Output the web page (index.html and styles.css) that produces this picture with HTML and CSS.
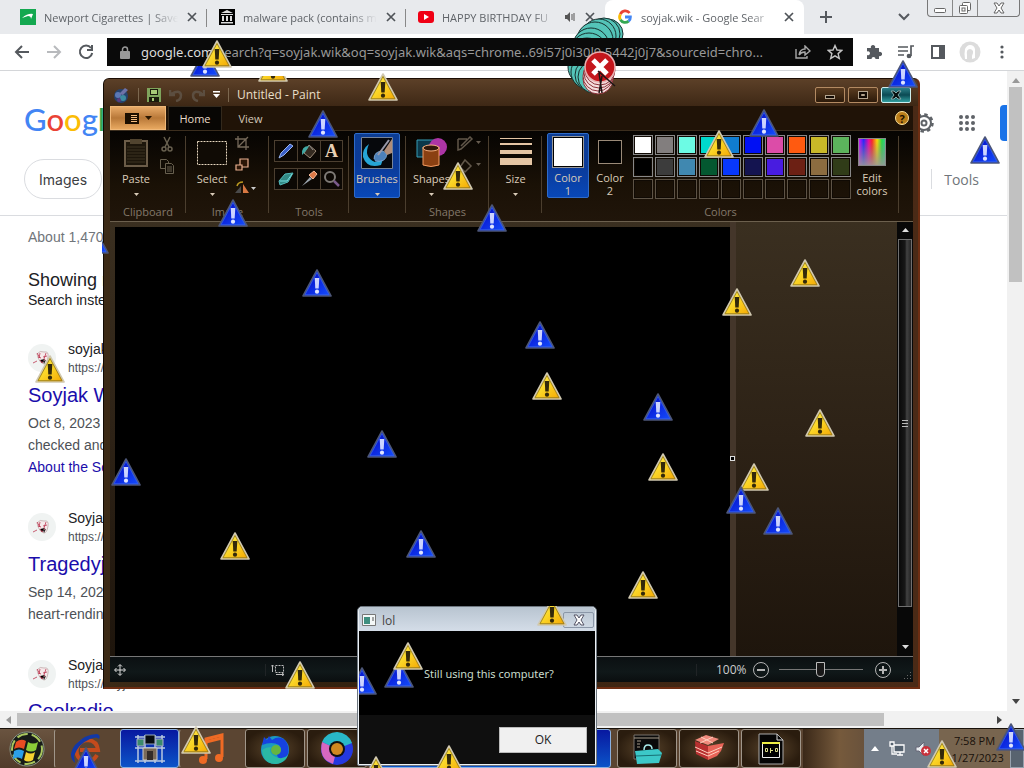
FILE: index.html
```html
<!DOCTYPE html>
<html lang="en">
<head>
<meta charset="utf-8">
<title>Desktop</title>
<link rel="stylesheet" href="styles.css">
</head>
<body>
<svg class="defs" width="0" height="0" aria-hidden="true">
  <defs>
    <linearGradient id="gy" x1="0" y1="0" x2="1" y2="1"><stop offset="0" stop-color="#fff45c"/><stop offset=".5" stop-color="#fbd526"/><stop offset="1" stop-color="#f4a400"/></linearGradient>
    <linearGradient id="gb" x1="0" y1="0" x2="1" y2="1"><stop offset="0" stop-color="#0000a8"/><stop offset=".5" stop-color="#0c28e0"/><stop offset="1" stop-color="#1450ff"/></linearGradient>
    <linearGradient id="rainbow"><stop offset="0" stop-color="#f0f"/><stop offset=".2" stop-color="#22f"/><stop offset=".38" stop-color="#e0a"/><stop offset=".5" stop-color="#f22"/><stop offset=".68" stop-color="#fd0"/><stop offset=".85" stop-color="#2d4"/><stop offset="1" stop-color="#3c9"/></linearGradient>
    <linearGradient id="fadegray" x1="0" y1="0" x2="0" y2="1"><stop offset="0" stop-color="#888" stop-opacity="0"/><stop offset="1" stop-color="#999" stop-opacity=".9"/></linearGradient>
    <symbol id="warn" viewBox="0 0 30 28"><path d="M15 1 29 27H1z" fill="url(#gy)" stroke="#d0c8b0" stroke-width="1.6" stroke-linejoin="round"/><path d="M15 3.500 27 25.700H3z" fill="none" stroke="#8f7620" stroke-width=".8"/><path d="M12.700 9h4.600l-.6 10.500h-3.400z" fill="#33290a"/><circle cx="15" cy="22.700" r="2.100" fill="#33290a"/></symbol>
    <symbol id="info" viewBox="0 0 30 28"><path d="M15 1 29 27H1z" fill="url(#gb)" stroke="#4c5678" stroke-width="1.600" stroke-linejoin="round"/><path d="M15 3.500 27 25.700H3z" fill="none" stroke="#3560e8" stroke-width=".8"/><path d="M12.700 9h4.600l-.6 10.500h-3.400z" fill="#ccd4ff"/><circle cx="15" cy="22.700" r="2.100" fill="#dfe4ff"/></symbol>
    <symbol id="close" viewBox="0 0 12 12"><path d="M2 2l8 8M10 2l-8 8" stroke="#4f5358" stroke-width="1.700"/></symbol>
    <symbol id="down" viewBox="0 0 7 4"><path d="M0 0h7L3.500 4z" fill="currentColor"/></symbol>
    <symbol id="face" viewBox="0 0 28 28"><circle cx="14" cy="14" r="14" fill="#f0f3f2"/><path d="M9 10q3-4 7-2 5-1 4 5-1 7-4 7-5-1-7-10" fill="#f6e9ea" stroke="#b9a0a0" stroke-width=".7"/><path d="M9 9l3 5M12 9l-1 5M18 9l-2 6M10 13l3 1M15 13l4-1M12 16l2 3 3-4M5 19l4-2" stroke="#bb3650" stroke-width=".8"/><path d="M15 17l3-1-2 4z" fill="#222"/></symbol>
    <clipPath id="c1"><path d="M180 66h60v20h-60z"/></clipPath>
    <clipPath id="c2"><path d="M250 76h60v20h-60z"/></clipPath>
    <clipPath id="c3"><path d="M102 220h40v50h-40z"/></clipPath>
    <clipPath id="c4"><path d="M359 660h40v50h-40z"/></clipPath>
    <clipPath id="c5"><path d="M530 606h50v40h-50z"/></clipPath>
    <clipPath id="c6"><path d="M560 10h80v28h-80zM560 66h80v40h-80z"/></clipPath>
  </defs>
</svg>

<div class="desktop">
  <section class="browser">
    <div class="tabstrip">
      <div class="tab"><svg class="fav" viewBox="0 0 16 16"><path fill="#14a850" d="M0 0h16v16H0z"/><path d="M2 9q6-5 11-4l-2 5q0-3-3-3z" fill="#fff"/></svg><span class="tabname">Newport Cigarettes | Save</span><button class="x" aria-label="Close tab"><svg width="12" height="12"><use href="#close"/></svg></button></div>
      <div class="tab"><svg class="fav" viewBox="0 0 16 16"><path d="M0 0h16v16H0z"/><path d="M8 1l6 3H2zM2 5h12v1H2zM3 7h2v5H3zM7 7h2v5H7zM11 7h2v5h-2zM2 13h12v1.500H2z" fill="#ddd"/></svg><span class="tabname">malware pack (contains m</span><button class="x" aria-label="Close tab"><svg width="12" height="12"><use href="#close"/></svg></button></div>
      <div class="tab"><svg class="fav" viewBox="0 0 16 16"><rect y="2" width="16" height="12" rx="3" fill="#f00014"/><path d="M6 5l5 3-5 3z" fill="#fff"/></svg><span class="tabname">HAPPY BIRTHDAY FU</span><svg class="audio" viewBox="0 0 12 12"><path d="M1 4h2l3-3v10L3 8H1z" fill="#555"/><path d="M8 3v6M10 2v8" stroke="#555" stroke-width="1"/></svg><button class="x" aria-label="Close tab"><svg width="12" height="12"><use href="#close"/></svg></button></div>
      <div class="tab active"><svg class="fav" viewBox="0 0 16 16" fill="none" stroke-width="2.800"><path d="M12.600 4A5.400 5.400 0 0 0 3.400 5.200" stroke="#ea4335"/><path d="M3.400 5.200a5.400 5.400 0 0 0 0 5.600" stroke="#fbbc05"/><path d="M3.400 10.800a5.400 5.400 0 0 0 8.200 1.300" stroke="#34a853"/><path d="M11.600 12.100Q13.500 10.500 13.400 8H8" stroke="#4285f4"/></svg><span class="tabname">soyjak.wik - Google Sear</span><button class="x" aria-label="Close tab"><svg width="12" height="12"><use href="#close"/></svg></button></div>
      <button class="newtab" aria-label="New tab"><svg width="14" height="14"><path d="M7 1v12M1 7h12" stroke="#55595e" stroke-width="2"/></svg></button>
      <button class="tabmenu" aria-label="Search tabs"><svg width="12" height="8"><path d="M1 1l5 5 5-5" fill="none" stroke="#55595e" stroke-width="2"/></svg></button>
      <div class="winbtns">
        <button aria-label="Minimize"><svg width="14" height="12"><rect x="1.500" y="6.500" width="11" height="4" rx="1" fill="#fff" stroke="#666"/></svg></button>
        <button aria-label="Restore"><svg width="14" height="14" fill="#fff" stroke="#666"><rect x="4.500" y="1.500" width="8" height="8" rx="1"/><rect x="1.500" y="4.500" width="8" height="8" rx="1"/><rect x="4" y="7" width="3" height="3"/></svg></button>
        <button class="wide" aria-label="Close"><svg width="14" height="12"><path d="M2 1h3l2 3 2-3h3L9 6l3 5H9L7 8l-2 3H2l3-5z" fill="#fff" stroke="#666"/></svg></button>
      </div>
    </div>
    <div class="toolbar">
      <button aria-label="Back"><svg width="16" height="16" fill="none" stroke="#55595e" stroke-width="2"><path d="M15 8H2M8 2L2 8l6 6"/></svg></button>
      <button aria-label="Forward"><svg width="16" height="16" fill="none" stroke="#b8babd" stroke-width="2"><path d="M1 8h13M8 2l6 6-6 6"/></svg></button>
      <button aria-label="Reload"><svg width="16" height="16" fill="none" stroke="#55595e" stroke-width="2"><path d="M13 4A6.200 6.200 0 1 0 14.200 9"/><path d="M14 1v5H9" /></svg></button>
      <div class="omnibox">
        <svg width="10" height="13"><rect y="5" width="10" height="8" rx="1" fill="#999"/><path d="M2.500 5V3.500a2.500 2.500 0 0 1 5 0V5" fill="none" stroke="#999" stroke-width="1.500"/></svg>
        <span class="url"><b>google.com</b>/search?q=soyjak.wik&amp;oq=soyjak.wik&amp;aqs=chrome..69i57j0i30l9.5442j0j7&amp;sourceid=chro...</span>
        <button aria-label="Share"><svg width="16" height="14" fill="none" stroke="#a9a9a9" stroke-width="1.400"><path d="M1 4v9h11v-2M4 10q1-6 6-6V1l5 5-5 4V7q-4 0-6 3"/></svg></button>
        <button aria-label="Bookmark"><svg width="16" height="16"><path d="M8 1.500l2 4.500 4.800.4-3.700 3.200 1.200 4.800L8 11.800l-4.300 2.600 1.200-4.800L1.200 6.400 6 6z" fill="none" stroke="#c4c4c4" stroke-width="1.400"/></svg></button>
      </div>
      <button aria-label="Extensions"><svg width="16" height="16"><path d="M1 4h4a2.200 2.200 0 1 1 4 0h4v4a2.200 2.200 0 1 1 0 4v3H9.500a2 2 0 1 0-4 0H1v-4a2 2 0 1 0 0-3.500z" fill="#55595e"/></svg></button>
      <button aria-label="Media"><svg width="16" height="16" fill="none" stroke="#55595e" stroke-width="1.700"><path d="M0 3h10M0 7h10M0 11h6M16 2h-3v10"/><circle cx="11" cy="12" r="1.500" fill="#55595e"/></svg></button>
      <button aria-label="Side panel"><svg width="16" height="16"><rect x="2" y="2" width="12" height="12" fill="none" stroke="#55595e" stroke-width="2"/><path d="M9 2h5v12H9z" fill="#55595e"/></svg></button>
      <button aria-label="Profile"><svg width="22" height="22"><circle cx="11" cy="11" r="10.500" fill="#dcdcdc"/><path d="M6 18q-1-5 0-10 2-4 5-4 4 0 5 4v9l-3 1v-3q3-6-2-7-4 0-3 6v4z" fill="#fff"/></svg></button>
      <button aria-label="Menu"><svg width="16" height="16" fill="#55595e"><circle cx="8" cy="3" r="1.600"/><circle cx="8" cy="8" r="1.600"/><circle cx="8" cy="13" r="1.600"/></svg></button>
    </div>
    <div class="view">
      <div class="page">
        <header class="ghead">
          <div class="grow">
            <a class="glogo" href="#"><span class="bl">G</span><span class="rd">o</span><span class="yl">o</span><span class="bl">g</span><span class="gr">l</span><span class="rd">e</span></a>
            <div class="gtools">
              <button aria-label="Settings"><svg width="20" height="20" fill="none" stroke="#5f6368"><circle cx="10" cy="10" r="7" stroke-width="2"/><circle cx="10" cy="10" r="8.500" stroke-width="2.500" stroke-dasharray="3.400 3.270"/><circle cx="10" cy="10" r="2.500" stroke-width="2"/></svg></button>
              <button aria-label="Apps"><svg width="18" height="18" fill="#5f6368"><circle cx="3" cy="3" r="2"/><circle cx="9" cy="3" r="2"/><circle cx="15" cy="3" r="2"/><circle cx="3" cy="9" r="2"/><circle cx="9" cy="9" r="2"/><circle cx="15" cy="9" r="2"/><circle cx="3" cy="15" r="2"/><circle cx="9" cy="15" r="2"/><circle cx="15" cy="15" r="2"/></svg></button>
              <button class="signin" aria-label="Sign in"></button>
            </div>
          </div>
          <div class="grow"><button class="chip">Images</button><button class="gt">Tools</button></div>
        </header>
        <main class="results">
          <p class="stats">About 1,470,000 results</p>
          <p class="showing">Showing results for</p>
          <p class="instead">Search instead for</p>
          <article>
            <div class="site"><svg width="28" height="28"><use href="#face"/></svg><div><div class="sn">soyjak.wiki</div><div class="su">https://soyjak.wiki</div></div></div>
            <h3><a href="#">Soyjak Wiki</a></h3>
            <p>Oct 8, 2023 — This page was<br>checked and verified</p>
            <a class="more" href="#">About the Soyjak</a>
          </article>
          <article>
            <div class="site"><svg width="28" height="28"><use href="#face"/></svg><div><div class="sn">Soyjak Wiki</div><div class="su">https://soyjak.wiki</div></div></div>
            <h3><a href="#">Tragedyjak</a></h3>
            <p>Sep 14, 2023 — This is a<br>heart-rending variant</p>
          </article>
          <article>
            <div class="site"><svg width="28" height="28"><use href="#face"/></svg><div><div class="sn">Soyjak Wiki</div><div class="su">https://soyjak.wiki</div></div></div>
            <h3><a href="#">Coolradio</a></h3>
          </article>
        </main>
      </div>
      <div class="vbar"><svg width="8" height="5"><path d="M0 5h8L4 0z" fill="#999"/></svg><i></i><svg width="8" height="5"><path d="M0 0h8L4 5z" fill="#444"/></svg></div>
    </div>
    <div class="hbar"><svg width="5" height="8"><path d="M5 0v8L0 4z" fill="#999"/></svg><i></i><svg width="5" height="8"><path d="M0 0v8l5-4z" fill="#444"/></svg></div>
  </section>

  <section class="paint">
    <div class="ptitle">
      <svg width="18" height="18"><circle cx="9" cy="10" r="7" fill="#26436e"/><circle cx="6" cy="9" r="3" fill="#5c78b5"/><circle cx="11" cy="12" r="3" fill="#3d8ba0"/><path d="M7 8l6-6 3 2-5 5z" fill="#6d72a8"/><circle cx="7" cy="14" r="2" fill="#5a3a80"/></svg>
      <i class="bar"></i>
      <button aria-label="Save"><svg width="14" height="14"><path fill="#7fa45c" d="M0 0h14v14H0z"/><path fill="#1a1a0c" d="M3 1h8v6H3zM2 9h10v5H2z"/><path fill="#a8c978" d="M4 2h6v4H4zM5 10h2v3H5z"/></svg></button>
      <button aria-label="Undo"><svg width="14" height="14" fill="none" stroke="#5c4e40" stroke-width="2.500"><path d="M1 2v5h5M2 6q9-5 10 1 0 5-5 6"/></svg></button>
      <button aria-label="Redo"><svg width="14" height="14" fill="none" stroke="#5c4e40" stroke-width="2.500"><path d="M13 2v5H8M12 6Q3 1 2 7q0 5 5 6"/></svg></button>
      <button aria-label="Customize"><svg width="7" height="7" fill="#fff"><path d="M0 0h7v1.500H0zM0 3h7L3.500 7z"/></svg></button>
      <i class="bar"></i>
      <span class="pname">Untitled - Paint</span>
      <div class="pbtns">
        <button aria-label="Minimize"><svg width="14" height="10"><rect x="2.500" y="5.500" width="9" height="3" fill="#110a04" stroke="#b4a48e"/></svg></button>
        <button aria-label="Maximize"><svg width="14" height="10"><rect x="2.500" y="1.500" width="9" height="7" fill="#110a04" stroke="#b4a48e"/><path d="M5.500 4.500h3v1h-3z" fill="#4a321c" stroke="#b4a48e"/></svg></button>
        <button class="pclose" aria-label="Close"><svg width="14" height="10"><path d="M2 1h3l2 2 2-2h3L9 5l3 4H9L7 7 5 9H2l3-4z" fill="#08100f" stroke="#8aa"/></svg></button>
      </div>
    </div>
    <div class="pinner">
      <div class="ptabs">
        <button class="pfile" aria-label="Paint menu"><svg width="14" height="11"><path d="M0 0h14v11H0z" fill="#1c0f00"/><path d="M6 2h6v1H6zM6 4h6v1H6zM6 6h6v1H6zM6 8h6v1H6z" fill="#f4bc80"/></svg><svg width="7" height="4"><use href="#down"/></svg></button>
        <button class="ptab on">Home</button><button class="ptab">View</button>
        <button class="help" aria-label="Help">?</button>
      </div>
      <div class="ribbon">
        <div class="grp g1"><div class="gbody">
          <button class="big"><svg width="32" height="32"><rect x="5" y="4" width="22" height="25" fill="#1d160b" stroke="#6b5c48" stroke-width="2"/><path d="M10 2h12v5H10z" fill="#51442f"/><path d="M7 10h18M7 13h18M7 16h18M7 19h18M7 22h18M7 25h18" stroke="#3c3222"/></svg><span>Paste</span><svg width="5" height="3"><use href="#down"/></svg></button>
          <div class="small"><button aria-label="Cut"><svg width="16" height="16" fill="none" stroke="#68604f" stroke-width="1.500"><path d="M5 1l5 10M11 1L6 11"/><circle cx="5" cy="13" r="2"/><circle cx="11" cy="13" r="2"/></svg></button><button aria-label="Copy"><svg width="16" height="16" fill="#120d06" stroke="#68604f"><path d="M1.500 1.500h6l2 2v7h-8z"/><path d="M6.500 5.500h6l2 2v8h-8zM8 9h5M8 11h5M8 13h5"/></svg></button></div>
        </div><div class="glabel">Clipboard</div></div>
        <div class="grp g2"><div class="gbody">
          <button class="big"><svg width="32" height="32"><rect x="1.500" y="4.500" width="29" height="23" fill="#100b05" stroke="#e8d8c0" stroke-dasharray="2 1"/></svg><span>Select</span><svg width="5" height="3"><use href="#down"/></svg></button>
          <div class="small"><button aria-label="Crop"><svg width="14" height="14" fill="none" stroke="#75695a" stroke-width="1.300"><path d="M3 0v11h11M0 3h11v11M3 11L13 1"/></svg></button><button aria-label="Resize"><svg width="14" height="14" fill="#2b1607" stroke="#eab090" stroke-width="1.200"><path d="M5 1h8v8H5z"/><path d="M1 7h6v5H1z"/></svg></button><button aria-label="Rotate"><svg width="22" height="14"><path d="M8 13V4l6 9z" fill="#d87842"/><path d="M6 13V6l-6 7z" fill="#4a4a4a"/><path d="M2 6q1-4 6-4" fill="none" stroke="#bc9a20" stroke-width="1.500"/><path d="M16 7h5l-2.500 3z" fill="#ccc"/></svg></button></div>
        </div><div class="glabel">Image</div></div>
        <div class="grp g3"><div class="gbody"><div class="toolgrid">
          <button aria-label="Pencil"><svg width="18" height="18"><path d="M2 16l2-5 9-9 3 2-9 9z" fill="#3a60c8" stroke="#9ab4ee"/></svg></button>
          <button aria-label="Fill"><svg width="18" height="18"><path d="M9 3l7 6-6 7-6-5z" fill="#342a20" stroke="#9d8b78"/><path d="M9 4Q1 4 2 13l3-3 3-4z" fill="#42a9a4"/><path d="M9 3l4 5" stroke="#888"/></svg></button>
          <button class="atext" aria-label="Text">A</button>
          <button aria-label="Eraser"><svg width="18" height="18"><path d="M2 11l6-7 8-1-5 9-8 3z" fill="#328a86" stroke="#5bb"/><path d="M3 11h7l5-7" fill="none" stroke="#7dd"/></svg></button>
          <button aria-label="Color picker"><svg width="18" height="18"><path d="M2 16l8-9 2 2z" fill="#9ba4ad"/><path d="M9 5l5-4 3 3-4 5z" fill="#dc7948" stroke="#f3b898"/></svg></button>
          <button aria-label="Magnifier"><svg width="18" height="18" fill="none"><circle cx="7" cy="7" r="5" stroke="#7e7a76" stroke-width="2"/><path d="M11 11l5 5" stroke="#795a8a" stroke-width="2.500"/></svg></button>
        </div></div><div class="glabel">Tools</div></div>
        <div class="grp g4"><div class="gbody">
          <button class="big sel"><svg width="32" height="32"><path d="M.5.5h31v31H.5z" fill="#06080c" stroke="#76849a"/><path d="M8 7Q2 20 14 25l8-3-2 6Q6 32 2 20 1 12 8 7" fill="#26a5d6"/><path d="M13 22q0-8 9-8l4 3q-1 9-12 7" fill="#4c80ba" stroke="#8ab4dc" stroke-width=".7"/><path d="M23 14l8-12v14l-5 2z" fill="#b08c78"/><path d="M17 18L28 3" stroke="#99a" stroke-width="2"/></svg><span>Brushes</span><svg width="5" height="3"><use href="#down"/></svg></button>
        </div></div>
        <div class="grp g5"><div class="gbody">
          <button class="big"><svg width="32" height="32"><path d="M1 3h17v17H1z" fill="#0b384a" stroke="#379cb6"/><circle cx="22" cy="10" r="9" fill="#ad35a6"/><path d="M7 10h16v18q-8 3-16 0z" fill="#8a4012" stroke="#f29a60"/><ellipse cx="15" cy="11" rx="8" ry="3" fill="#30180a" stroke="#f6b080"/></svg><span>Shapes</span><svg width="5" height="3"><use href="#down"/></svg></button>
          <div class="small"><button aria-label="Outline"><svg width="24" height="16"><path d="M1 3h9M1 3v11l3-1L15 3l-2-2-9 9" fill="none" stroke="#61574a" stroke-width="1.500"/><path d="M19 5h5l-2.500 3z" fill="#665c50"/></svg></button><button aria-label="Fill shape"><svg width="24" height="16"><path d="M8 2l6 6-6 6-5-5z" fill="none" stroke="#61574a" stroke-width="1.500"/><path d="M19 5h5l-2.500 3z" fill="#665c50"/></svg></button></div>
        </div><div class="glabel">Shapes</div></div>
        <div class="grp g6"><div class="gbody">
          <button class="big"><svg width="32" height="32" fill="#e4c5a4"><path d="M0 1h32v1H0zM0 6h32v2H0zM0 13h32v4H0zM0 21h32v7H0z"/></svg><span>Size</span><svg width="5" height="3"><use href="#down"/></svg></button>
        </div></div>
        <div class="grp g7"><div class="gbody">
          <button class="big sel col"><i class="sw white"></i><span>Color<br>1</span></button>
          <button class="big col two"><i class="sw black"></i><span>Color<br>2</span></button>
          <div class="palette">
            <button class="p1" aria-label="White"></button><button class="p2" aria-label="Gray"></button><button class="p3" aria-label="Aqua"></button><button class="p4" aria-label="Turquoise"></button><button class="p5" aria-label="Azure"></button><button class="p6" aria-label="Blue"></button><button class="p7" aria-label="Pink"></button><button class="p8" aria-label="Orange"></button><button class="p9" aria-label="Olive"></button><button class="p10" aria-label="Green"></button>
            <button class="p11" aria-label="Black"></button><button class="p12" aria-label="Dark gray"></button><button class="p13" aria-label="Steel"></button><button class="p14" aria-label="Dark green"></button><button class="p15" aria-label="Royal blue"></button><button class="p16" aria-label="Navy"></button><button class="p17" aria-label="Violet"></button><button class="p18" aria-label="Maroon"></button><button class="p19" aria-label="Tan"></button><button class="p20" aria-label="Moss"></button>
            <button aria-label="Empty"></button><button aria-label="Empty"></button><button aria-label="Empty"></button><button aria-label="Empty"></button><button aria-label="Empty"></button><button aria-label="Empty"></button><button aria-label="Empty"></button><button aria-label="Empty"></button><button aria-label="Empty"></button><button aria-label="Empty"></button>
          </div>
          <button class="big edit"><svg width="28" height="28"><path d="M0 0h28v28H0z" fill="url(#rainbow)"/><path d="M.5.5h27v27H.5z" fill="url(#fadegray)" stroke="#888"/></svg><span>Edit<br>colors</span></button>
        </div><div class="glabel">Colors</div></div>
      </div>
      <div class="work">
        <div class="canvas"></div>
        <div class="empty"><i class="handle"></i></div>
        <div class="pscroll"><svg width="7" height="4" fill="#ddd"><path d="M0 4h7L3.500 0z"/></svg><i><svg width="8" height="9" stroke="#bbb"><path d="M1 1.500h6M1 4.500h6M1 7.500h6"/></svg></i><svg width="7" height="4" fill="#ddd"><path d="M0 0h7L3.500 4z"/></svg></div>
      </div>
      <div class="status">
        <div class="s1"><svg width="12" height="12" fill="none" stroke="#ddd"><path d="M6 1v10M1 6h10M4 2.500L6 .5l2 2M4 9.500l2 2 2-2M2.500 4l-2 2 2 2M9.500 4l2 2-2 2"/></svg></div>
        <div class="s2"><svg width="14" height="12" fill="none" stroke="#bbb"><path d="M4.500 1.500h8v7h-8z" stroke-dasharray="2 1"/><path d="M1.500 1v7M0 2.500l1.500-1.500L3 2.500M5 10.500h8M11 9l2 1.500-2 1.500"/></svg></div>
        <div class="s3"><span>100%</span>
          <button class="zb" aria-label="Zoom out"><svg width="16" height="16" fill="none" stroke="#b4b4b4"><circle cx="8" cy="8" r="7.500"/><path d="M4 8h8" stroke-width="2"/></svg></button>
          <input type="range" aria-label="Zoom" min="0" max="100" value="50">
          <button class="zb" aria-label="Zoom in"><svg width="16" height="16" fill="none" stroke="#b4b4b4"><circle cx="8" cy="8" r="7.500"/><path d="M4 8h8M8 4v8" stroke-width="2"/></svg></button>
        </div>
        <svg class="grip" width="9" height="9" fill="#666"><path d="M6 0h1v1H6zM3 3h1v1H3zM6 3h1v1H6zM0 6h1v1H0zM3 6h1v1H3zM6 6h1v1H6z"/></svg>
      </div>
    </div>
  </section>

  <nav class="taskbar">
    <button class="start" aria-label="Start"><svg width="38" height="38"><circle cx="19" cy="19" r="17" fill="#171b18" stroke="#8d9a8c"/><circle cx="19" cy="19" r="15" fill="none" stroke="#a9c65e" stroke-width="2" stroke-dasharray="11 4"/><path d="M8 12q5-4 10-1l-2 8q-5-3-10 0z" fill="#e84c22"/><path d="M20 12q5 3 10 0l-2 8q-5 3-10 0z" fill="#8ccc38"/><path d="M6 21q5-3 10 0l-2 8q-4-3-9 0z" fill="#2ba0e8"/><path d="M18 22q5 3 9 0l-2 8q-5 3-9 0z" fill="#f7d22f"/></svg></button>
    <button class="task plain" aria-label="Internet Explorer"><svg width="34" height="34"><path d="M28 23q-5 9-14 6-8-4-6-13 3-8 11-8 9 1 10 10H11" fill="none" stroke="#c44a1c" stroke-width="4"/><path d="M6 31Q-2 24 6 13 16 2 28 2q4 1 2 5-2-3-9 0Q9 12 5 24z" fill="#1238a8"/></svg></button>
    <button class="task blue" aria-label="Control panel"><svg width="32" height="30"><path d="M1 3h30M1 14h30M1 27h30M4 1v28M28 1v28M11 1v28M21 1v28" stroke="#b8c8e0" stroke-width="1.500"/><path d="M11 1h10v9H11z" fill="#080c12" stroke="#9ab"/><path d="M3 5h7v7H3zM22 5h7v7h-7z" fill="#3a8a6c" stroke="#aac"/><path d="M9 14h14v12H9z" fill="#7a6a58" stroke="#ccc"/><path d="M13 17h6v9h-6z" fill="#332b26"/></svg></button>
    <button class="task plain" aria-label="Music"><svg width="32" height="32"><path d="M11 26V6l16-4v22" fill="none" stroke="#ef6a24" stroke-width="3"/><path d="M11 9l16-4" stroke="#ef6a24" stroke-width="3"/><circle cx="8" cy="27" r="4" fill="#ef6a24"/><circle cx="24" cy="25" r="4" fill="#ef6a24"/></svg></button>
    <button class="task" aria-label="Firefox"><svg width="32" height="32"><circle cx="16" cy="17" r="14" fill="#1c9ac0"/><path d="M3 12L5 4l3 3 2-4 3 4Q22 1 28 10q4 9-2 16-8 1-8-5 7-3 2-9-7-4-17 0z" fill="#1642e0"/><path d="M3 17q1 14 14 14 9-1 12-9-6 6-14 1-6-4-3-9-5 0-9 3" fill="#2bb8a4"/><circle cx="17" cy="17" r="5" fill="#66b440"/></svg></button>
    <button class="task" aria-label="Chrome"><svg width="34" height="34"><circle cx="17" cy="17" r="16" fill="#2438e0"/><path d="M17 17L2 10A16 16 0 0 1 32 11z" fill="#29b8c8"/><path d="M17 17L2 10q-3 13 5 19l6 3z" fill="#d868c0"/><circle cx="17" cy="17" r="8" fill="#111"/><circle cx="17" cy="17" r="6" fill="#d08820"/></svg></button>
    <button class="task blue gap" aria-label="Paint"></button>
    <button class="task" aria-label="Toolbox"><svg width="32" height="32"><path d="M3 2h25v24H3z" fill="#0a0a0a" stroke="#77706a"/><path d="M3 5h25M6 8h4M6 11h3M6 14h3" stroke="#a89c8a"/><path d="M4 18l23-2 4 4-3 10-22 1z" fill="#3cc8c8"/><path d="M13 17q0-5 4-5t4 4" fill="none" stroke="#aee" stroke-width="1.500"/><path d="M5 23l25-1" stroke="#176f74"/></svg></button>
    <button class="task" aria-label="Registry"><svg width="34" height="30"><path d="M3 6l11-5 13 4-11 6z" fill="#f08a7c"/><path d="M3 7l13 5v14L4 20z" fill="#b83030"/><path d="M16 12l16-3-3 8-4 5-9 4z" fill="#e86458"/><path d="M3 13l13 6 14-6M4 17l12 5 11-5M9 3l12 6M21 3L8 9" stroke="#ffd0c0" stroke-width="1" fill="none"/></svg></button>
    <button class="task" aria-label="Script"><svg width="28" height="32"><path d="M2 1h18l6 6v24H2z" fill="#050505" stroke="#aaa"/><path d="M20 1v6h6" fill="none" stroke="#ddd"/><path d="M5.500 9.500h17v15h-17z" fill="#000" stroke="#eee"/><path d="M5 9h18v2H5z" fill="#ee4"/><path d="M8.500 15.500h2v3h-2zM13.500 15v5M13 17.500h3M18.500 15.500h2v3h-2z" stroke="#dd8" fill="none"/></svg></button>
    <div class="spacer"></div>
    <div class="tray">
      <svg width="8" height="5" fill="#fff"><path d="M0 5h8L4 0z"/></svg>
      <svg width="16" height="16" fill="#54616e" stroke="#fff" stroke-width="1.300"><path d="M5 4h10v7H5zM8 14h6M11 11v3M1 1h4v4H1zM3 5v8h5"/></svg>
      <svg width="16" height="16"><path d="M1 6h3l5-5v14l-5-5H1z" fill="#e8ecf0" stroke="#667"/><circle cx="11" cy="10" r="5" fill="#c8323c"/><path d="M9 8l4 4M13 8l-4 4" stroke="#fff" stroke-width="1.500"/></svg>
    </div>
    <div class="clock"><span>7:58 PM</span><span>11/27/2023</span></div>
    <button class="peek" aria-label="Show desktop"></button>
  </nav>

  <section class="dialog" role="dialog" aria-label="lol">
    <div class="dtitle"><svg width="14" height="12"><path d="M.5.5h13v11H.5z" fill="#f4f8f8" stroke="#777"/><path d="M2 3h6v7H2z" fill="#3f8f80"/><path d="M11 3v4" stroke="#555"/></svg><span>lol</span><button aria-label="Close"><svg width="14" height="12"><path d="M2 1h3l2 3 2-3h3L9 6l3 5H9L7 8l-2 3H2l3-5z" fill="#fff" stroke="#556"/></svg></button></div>
    <div class="dbody">Still using this computer?</div>
    <div class="dfoot"><button>OK</button></div>
  </section>

  <svg class="overlay" aria-hidden="true">
    <g clip-path="url(#c6)"><g fill="#54c4b8" stroke="#18302e"><circle cx="608" cy="34" r="15"/><circle cx="604" cy="34" r="16"/><circle cx="599" cy="36" r="17"/><circle cx="595" cy="40" r="18"/><circle cx="591" cy="46" r="18"/><circle cx="589" cy="51" r="18"/><circle cx="587" cy="56" r="18"/><circle cx="586" cy="62" r="18"/><circle cx="586" cy="67" r="18"/><circle cx="588" cy="72" r="17"/><circle cx="591" cy="75" r="16"/><circle cx="594" cy="77" r="16"/></g></g>
    <g fill="#f4dede" stroke="#8c3038"><circle cx="598" cy="79" r="15"/><circle cx="598" cy="76" r="15"/><circle cx="599" cy="73" r="15"/><circle cx="600" cy="70" r="15"/></g>
    <circle cx="600" cy="67" r="15" fill="#c4161c" stroke="#e8b0b0" stroke-width="1.500"/>
    <path d="M593 60l14 14M607 60l-14 14" stroke="#fff" stroke-width="5"/>
    <path d="M598 71l17 15M599 73l3 20M602 76l-3 17" stroke="#1c1414" stroke-width="1.500"/>
    <g clip-path="url(#c1)"><use href="#info" x="190" y="49" width="30" height="28"/></g>
    <g clip-path="url(#c2)"><use href="#warn" x="258" y="54" width="30" height="28"/></g>
    <g clip-path="url(#c3)"><use href="#info" x="79" y="226" width="30" height="28"/></g>
    <g clip-path="url(#c4)"><use href="#info" x="347" y="667" width="30" height="28"/></g>
    <g clip-path="url(#c5)"><use href="#warn" x="537" y="598" width="30" height="28"/></g>
    <use href="#warn" x="202" y="40" width="30" height="28"/><use href="#warn" x="368" y="73" width="30" height="28"/>
    <use href="#warn" x="443" y="162" width="30" height="28"/><use href="#warn" x="704" y="130" width="30" height="28"/>
    <use href="#warn" x="790" y="259" width="30" height="28"/><use href="#warn" x="722" y="288" width="30" height="28"/>
    <use href="#warn" x="532" y="372" width="30" height="28"/><use href="#warn" x="805" y="409" width="30" height="28"/>
    <use href="#warn" x="648" y="453" width="30" height="28"/><use href="#warn" x="739" y="463" width="30" height="28"/>
    <use href="#warn" x="220" y="532" width="30" height="28"/><use href="#warn" x="628" y="571" width="30" height="28"/>
    <use href="#warn" x="35" y="355" width="30" height="28"/><use href="#warn" x="285" y="661" width="30" height="28"/>
    <use href="#warn" x="181" y="726" width="30" height="28"/><use href="#warn" x="434" y="745" width="30" height="28"/>
    <use href="#warn" x="361" y="756" width="30" height="28"/><use href="#warn" x="927" y="740" width="30" height="28"/>
    <use href="#info" x="308" y="110" width="30" height="28"/><use href="#info" x="888" y="60" width="30" height="28"/>
    <use href="#info" x="749" y="109" width="30" height="28"/><use href="#info" x="970" y="136" width="30" height="28"/>
    <use href="#info" x="218" y="199" width="30" height="28"/><use href="#info" x="477" y="204" width="30" height="28"/>
    <use href="#info" x="302" y="269" width="30" height="28"/><use href="#info" x="525" y="321" width="30" height="28"/>
    <use href="#info" x="643" y="393" width="30" height="28"/><use href="#info" x="367" y="430" width="30" height="28"/>
    <use href="#info" x="111" y="458" width="30" height="28"/><use href="#info" x="726" y="486" width="30" height="28"/>
    <use href="#info" x="763" y="507" width="30" height="28"/><use href="#info" x="406" y="530" width="30" height="28"/>
    <use href="#info" x="384" y="660" width="30" height="28"/><use href="#warn" x="393" y="642" width="30" height="28"/>
    <use href="#info" x="71" y="747" width="30" height="28"/><use href="#info" x="996" y="723" width="30" height="28"/>
  </svg>
</div>
</body>
</html>
```
FILE: styles.css
```css
* { box-sizing: border-box; }
body { margin: 0; font-family: "Open Sans", "Noto Sans", sans-serif; font-size: 12px; }
button { font: inherit; color: inherit; background: none; border: 0; padding: 0; display: flex; align-items: center; justify-content: center; }
svg { flex: none; display: block; }
a { text-decoration: none; }
p, h3 { margin: 0; font-weight: 400; }
.defs { position: absolute; }
.desktop { position: relative; height: 100vh; display: flex; flex-direction: column; overflow: hidden; background: #fff; }

/* browser */
.browser { flex: 1; min-height: 0; display: flex; flex-direction: column; }
.tabstrip { height: 34px; display: flex; align-items: center; background: #e8eaed; padding-left: 8px; color: #606469; }
.tab { width: 199px; height: 34px; display: flex; align-items: center; gap: 8px; padding: 0 9px 0 12px; position: relative; }
.tab:nth-child(-n+2)::after { content: ""; position: absolute; right: 0; top: 9px; height: 18px; border-right: 1px solid #888; }
.tab.active { background: #fff; border-radius: 8px 8px 0 0; }
.fav { width: 16px; height: 16px; }
.tabname { flex: 1; min-width: 0; font-size: 11px; overflow: hidden; white-space: nowrap; mask-image: linear-gradient(to right, #000 80%, transparent); }
.audio { width: 12px; height: 12px; }
.newtab { width: 44px; }
.tabmenu { margin-left: auto; margin-right: 17px; }
.winbtns { align-self: flex-start; display: flex; height: 17px; margin-right: 4px; border: 1px solid #777; border-top: 0; border-radius: 0 0 4px 4px; }
.winbtns button { width: 25px; border-right: 1px solid #888; }
.winbtns .wide { width: 41px; border-right: 0; }
.toolbar { height: 37px; display: flex; align-items: center; gap: 10px; padding: 0 11px; border-bottom: 1px solid #d4d6d9; }
.toolbar > button { width: 22px; }
.omnibox { flex: 1; min-width: 0; height: 28px; display: flex; align-items: center; gap: 16px; background: #0a0a0a; color: #989898; padding: 0 10px 0 13px; }
.omnibox svg { margin-right: -5px; }
.omnibox button { width: 16px; }
.omnibox button svg { margin-right: 0; }
.url { flex: 1; min-width: 0; overflow: hidden; white-space: nowrap; font: 13px/20px "Noto Sans", sans-serif; }
.url b { font-weight: 400; color: #dcdcdc; }
.view { flex: 1; min-height: 0; display: flex; }
.page { flex: 1; min-width: 0; overflow: hidden; font-family: "Liberation Sans", Arial, sans-serif; color: #202124; }
.ghead { padding: 32px 0 16px; border-bottom: 1px solid #dadce0; }
.grow { display: flex; align-items: center; justify-content: space-between; height: 40px; padding-left: 24px; }
.grow + .grow { margin-top: 16px; }
.glogo { font: 500 31px/36px Lato, sans-serif; padding-bottom: 8px; }
.bl { color: #4285f4; } .rd { color: #ea4335; } .yl { color: #fbbc05; } .gr { color: #34a853; }
.gtools { display: flex; align-items: center; gap: 24px; height: 36px; }
.signin { width: 90px; height: 36px; margin-right: -83px; border-radius: 4px; background: #1a73e8; }
.chip { height: 40px; padding: 0 14px; border: 1px solid #dadce0; border-radius: 20px; color: #3c4043; font: 14px Inter, sans-serif; }
.gt { height: 20px; padding: 0 28px 0 12px; border-left: 1px solid #dadce0; color: #70757a; font: 14px "Open Sans", sans-serif; }
.results { padding: 11px 28px; font-size: 14px; line-height: 22px; }
.stats { color: #70757a; line-height: 20px; }
.showing { font-size: 18px; line-height: 22px; margin-top: 22px; }
.instead { line-height: 18px; }
.results article { margin-top: 29px; }
.site { display: flex; align-items: center; gap: 12px; height: 40px; }
.sn { line-height: 20px; }
.su { font-size: 12px; line-height: 18px; color: #4d5156; }
.results h3 { font-size: 20px; line-height: 34px; }
.results a { color: #1a0dab; }
.results article p { color: #4d5156; }
.more { display: block; }
.vbar { width: 17px; background: #f1f1f1; display: flex; flex-direction: column; align-items: center; padding: 7px 0; }
.vbar i { width: 13px; height: 195px; background: #c1c1c1; margin: 4px 0 auto; }
.hbar { height: 17px; background: #f1f1f1; display: flex; align-items: center; padding: 0 22px 0 6px; }
.hbar i { height: 13px; width: 87%; background: #c1c1c1; margin: 0 auto 0 6px; }

/* paint */
.paint { position: absolute; left: 103px; top: 78px; right: 104px; bottom: 79px; display: flex; flex-direction: column; padding: 0 5px 5px 6px; background: linear-gradient(to right, #3c2a16, #32210f 20%, #4a2a16); border: solid #6d2d12; border-width: 1px 2px 2px 0; border-top-color: #1c0e04; border-left: 1px solid #120a03; border-radius: 6px 6px 0 0; color: #d9cbb8; font-size: 11px; }
.ptitle { height: 27px; margin: 0 -5px 0 -6px; padding: 4px 7px 0 8px; display: flex; align-items: center; gap: 8px; background: linear-gradient(#5c4028, #3e2815); border-radius: 5px 5px 0 0; }
.bar { width: 1px; height: 14px; background: #7c6850; }
.pname { font-size: 12px; color: #e8dfc8; }
.pbtns { display: flex; gap: 3px; margin-left: auto; }
.pbtns button { width: 30px; height: 16px; border: 1px solid #b38a62; border-radius: 2px; background: linear-gradient(#5a3c20, #2c1a0a); }
.pbtns .pclose { border-color: #cdeeee; background: linear-gradient(#2c8088, #0b4a54 50%, #32a0a0); }
.pinner { flex: 1; min-height: 0; display: flex; flex-direction: column; }
.ptabs { height: 24px; display: flex; align-items: stretch; background: #201307; padding-right: 4px; }
.pfile { width: 56px; gap: 6px; color: #2c1700; background: linear-gradient(#e8aa68, #b87838 50%, #e8a860); border: 1px solid #f0b878; }
.ptab { width: 57px; color: #d4c8b8; }
.ptab.on { margin-left: 2px; width: 54px; background: #080604; border: 1px solid #33291c; border-bottom: 0; color: #eadcc8; }
.help { margin: auto 0 auto auto; width: 14px; height: 14px; border: 1px solid #ffe39c; border-radius: 50%; background: #b97c18; color: #1c0f00; font-weight: 700; }
.ribbon { height: 92px; display: flex; background: linear-gradient(#060402, #1a1106 60%, #20150a); border-top: 1px solid #3c2e1e; border-bottom: 1px solid #6c604e; }
.grp { position: relative; display: flex; flex-direction: column; justify-content: space-between; padding: 2px 4px; }
.grp::after { content: ""; position: absolute; right: 0; top: 5px; bottom: 8px; border-right: 1px solid #4b3e2e; }
.g1 { width: 76px; } .g2 { width: 83px; } .g3 { width: 80px; } .g4 { width: 57px; } .g5 { width: 83px; } .g6 { width: 53px; } .g7 { flex: 1; margin-right: 14px; }
.gbody { display: flex; gap: 1px; }
.glabel { text-align: center; color: #83786a; line-height: 15px; }
.big { flex-direction: column; justify-content: flex-start; width: 46px; height: 65px; padding-top: 3px; line-height: 14px; gap: 3px; border: 1px solid transparent; }
.big > svg:last-child { margin-top: 4px; }
.sel { background: linear-gradient(#0c3d94, #0b3a98 50%, #0848b8); border-color: #2f6bc8; border-radius: 2px; }
.small { display: flex; flex-direction: column; gap: 6px; padding-top: 3px; align-items: flex-start; }
.g2 .small { gap: 8px; }
.g1 .big, .g2 .big { width: 44px; }
.g4 .big { margin-left: 1px; }
.g5 .big { width: 43px; }
.g5 .small { padding-left: 3px; }
.toolgrid { display: grid; grid-template-columns: repeat(3, 23px); grid-auto-rows: 22px; row-gap: 6px; padding: 7px 0 0 1px; }
.toolgrid button { border: 1px solid #4c3f30; border-right-width: 0; background: #0c0804; }
.toolgrid button:nth-child(3n) { border-right-width: 1px; }
.toolgrid .atext { font: 700 18px "Liberation Serif", serif; color: #e8d0b4; }
.col { width: 42px; padding-top: 2px; line-height: 13px; }
.g7 .gbody { gap: 0; padding-left: 1px; }
.sw { width: 32px; height: 32px; border: 1px solid #999; box-shadow: inset 0 0 0 1px #000; }
.white { background: #fff; } .black { background: #000; width: 24px; height: 24px; margin: 4px; border-color: #9a8a78; }
.palette { display: grid; grid-template-columns: repeat(10, 20px); grid-auto-rows: 20px; gap: 2px; margin: 2px 0 0 1px; }
.palette button { border: 1px solid #5d5346; box-shadow: inset 0 0 0 1px #100a04; }
.palette button:nth-child(-n+20) { border-color: #888; }
.p1 { background: #fff; } .p2 { background: #827e7e; } .p3 { background: #6cfbe4; } .p4 { background: #00d8cc; } .p5 { background: #107cd0; }
.p6 { background: #0010f4; } .p7 { background: #dc4ca8; } .p8 { background: #ff5a10; } .p9 { background: #c8b828; } .p10 { background: #5cb45c; }
.p11 { background: #000; } .p12 { background: #3c3c3c; } .p13 { background: #4088b0; } .p14 { background: #045830; } .p15 { background: #0838fc; }
.p16 { background: #141450; } .p17 { background: #481ce0; } .p18 { background: #6c2014; } .p19 { background: #8c6c40; } .p20 { background: #303c18; }
.edit { line-height: 13px; padding-top: 4px; gap: 5px; width: 42px; }
.two { margin-right: 1px; }
.work { flex: 1; min-height: 0; display: flex; background: linear-gradient(#3a2f20, #2d2216 50%, #1e150c); }
.canvas { flex: 1; margin: 5px 0 0 5px; background: #000; }
.empty { position: relative; width: 167px; border-left: 6px solid #44362a; }
.handle { position: absolute; left: -6px; top: 54%; width: 5px; height: 5px; background: #000; border: 1px solid #ddd; }
.pscroll { width: 16px; display: flex; flex-direction: column; align-items: center; justify-content: space-between; padding: 6px 1px 7px; background: #080808; }
.pscroll i { flex: 1; align-self: stretch; margin: 7px 0 38px; border: 1px solid #707070; background: linear-gradient(to right, #0a0a0a, #171717 50%, #424242 65%, #242424); display: flex; align-items: center; justify-content: center; }
.status { height: 26px; display: flex; align-items: center; border-top: 1px solid #777; background: linear-gradient(#0b1012, #101819 60%, #0a0e0f); position: relative; font-size: 12px; color: #ccc; }
.s1 { width: 156px; padding-left: 4px; border-right: 1px solid #202426; }
.s2 { flex: 1; padding-left: 5px; border-right: 1px solid #202426; }
.s3 { width: 216px; display: flex; align-items: center; padding-left: 19px; }
.s3 input { width: 84px; height: 18px; margin: 0 12px 0 10px; appearance: none; background: linear-gradient(#777, #777) center / 100% 1px no-repeat; }
.s3 input::-webkit-slider-thumb { appearance: none; width: 9px; height: 15px; background: #181818; border: 1px solid #bbb; border-radius: 1px 1px 5px 5px; }
.zb:first-of-type { margin-left: 6px; }
.grip { position: absolute; right: 0; bottom: 1px; }

/* taskbar */
.taskbar { height: 40px; display: flex; background: #5b4532; border-top: 1px solid #18110a; }
.start { width: 54px; background: linear-gradient(#6a5440, #503b2a); }
.task { width: 60px; margin-right: 2px; border: 1px solid #a0968a; border-radius: 3px; background: radial-gradient(#5a452c, #2a1c0e 75%); }
.task.plain { width: 64px; border-color: transparent; border-left-color: #a0968a; background: #5b4532; }
.task.blue { width: 59px; background: linear-gradient(#0818a0, #0c54c8); border-color: #8ab0e0; margin-right: 0; }
.task.blue.gap { width: 242px; margin-right: 6px; }
.spacer { flex: 1; background: linear-gradient(to right, #3a2818, #765a3c 60%, #69523c); }
.tray { width: 75px; display: flex; align-items: center; gap: 10px; padding-left: 7px; background: #747e8a; }
.clock { width: 71px; display: flex; flex-direction: column; align-items: center; justify-content: center; line-height: 17px; font-size: 11px; color: #17100a; background: #78654f; }
.peek { width: 14px; border: 1px solid #96a0ac; background: #58636f; }

/* message box */
.dialog { position: absolute; left: 357px; bottom: 2px; width: 240px; border: 1px solid #6e7780; border-radius: 5px 5px 2px 2px; background: #c6d0dc; padding: 0 1px 1px; box-shadow: inset 0 0 0 1px #eef2f6; }
.dtitle { height: 24px; display: flex; align-items: center; gap: 6px; padding: 2px 1px 0 3px; background: linear-gradient(#b8c4d0, #d4dde8); border-radius: 4px 4px 0 0; color: #444; }
.dtitle button { margin-left: auto; width: 31px; height: 16px; border: 1px solid #8b97a8; border-radius: 2px; }
.dbody { height: 84px; display: flex; align-items: center; padding-left: 65px; background: #000; color: #c8dccc; font: 11px "Noto Sans", sans-serif; }
.dfoot { height: 49px; display: flex; align-items: center; justify-content: flex-end; padding-right: 8px; background: #0f0f0f; }
.dfoot button { width: 88px; height: 26px; background: #f0f0f0; border: 1px solid #bbb; color: #222; }
.overlay { position: absolute; inset: 0; width: 100%; height: 100%; pointer-events: none; }
```
